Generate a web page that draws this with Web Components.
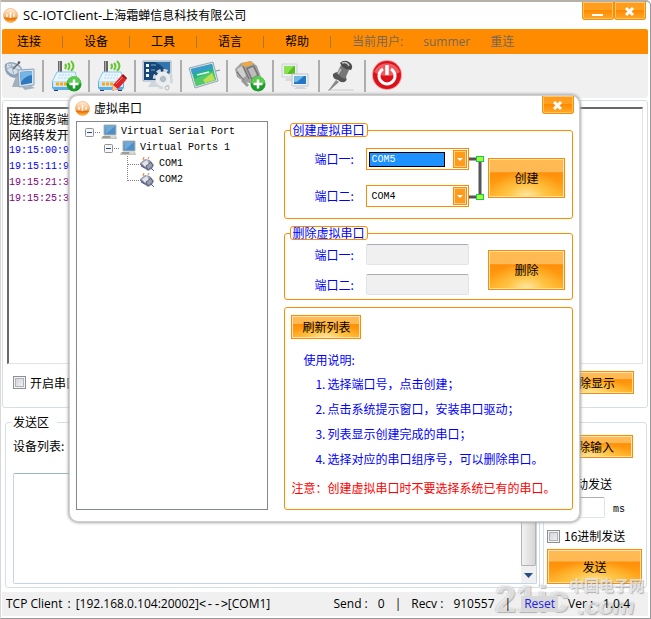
<!DOCTYPE html>
<html lang="zh-CN">
<head>
<meta charset="utf-8">
<title>SC-IOTClient</title>
<style>
body {
    margin: 0;
    background: #fff;
    font: 12px/16px "Open Sans", "Noto Sans CJK SC", sans-serif;
    color: #000;
    --orange: #ff8c00;
    --song: "Noto Sans CJK SC", sans-serif;
    --mono: "Liberation Mono", "Noto Sans CJK SC", monospace;
}
</style>
</head>
<body>
<client-window></client-window>

<template id="t-button">
    <style>
    :host { display: block; }
    button {
        box-sizing: border-box;
        width: 100%;
        height: 100%;
        min-height: 23px;
        padding: 0 8px;
        border: 1px solid var(--orange);
        box-shadow: inset 0 0 0 1px #ffe3b4;
        background:
            radial-gradient(ellipse 50% 70% at 50% 100%, #ffe9a8 0%, rgba(255, 205, 80, .7) 50%, rgba(255, 170, 40, 0) 100%),
            linear-gradient(#ffba50 0%, #ffb955 34%, #ff8f08 36%, #ff9a10 60%, #ffb42c 100%);
        font: 12px/16px var(--song);
        color: #000;
        white-space: nowrap;
    }
    </style>
    <button type="button"><slot></slot></button>
</template>

<template id="t-caption">
    <style>
    :host { display: block; width: 32px; height: 18px; }
    button {
        display: block;
        box-sizing: border-box;
        width: 100%;
        height: 100%;
        padding: 0;
        border: 1px solid #ff8c00;
        border-top: 0;
        border-radius: 0 0 3px 3px;
        box-shadow: inset 0 0 0 1px #ffc66a;
        background: linear-gradient(#ff9a1c 0%, #ffa020 45%, #ff8a00 50%, #ffa82c 100%);
    }
    svg { display: block; margin: 0 auto; }
    </style>
    <button type="button">
        <svg width="12" height="12" viewBox="0 0 12 12" stroke="#fff" fill="none"><path/></svg>
    </button>
</template>

<template id="t-logo">
    <style>
    :host { display: block; width: 15px; height: 15px; }
    svg { display: block; }
    </style>
    <svg width="15" height="15" viewBox="0 0 15 15">
        <defs>
            <linearGradient id="a" x1="0" y1="0" x2="0" y2="1">
                <stop offset="0" stop-color="#fff0dc"/>
                <stop offset=".4" stop-color="#fbc894"/>
                <stop offset=".65" stop-color="#f6a050"/>
                <stop offset=".75" stop-color="#ee7a10"/>
                <stop offset="1" stop-color="#ffc040"/>
            </linearGradient>
        </defs>
        <circle cx="7.500" cy="7.500" r="7" fill="url(#a)" stroke="#f4a050" stroke-width=".6"/>
        <path d="M4 9V6M7.500 10V4M11 9V6" stroke="#fff" stroke-width="1.400"/>
        <path d="M1 10q6.500 2 13 0" stroke="#e86c00" fill="none"/>
    </svg>
</template>

<template id="t-menu">
    <style>
    :host { display: block; background: var(--orange); border-radius: 2px 2px 0 0; }
    nav { display: flex; align-items: center; gap: 21px; height: 25px; padding: 0 15px; white-space: nowrap; }
    a { color: #000; text-decoration: none; }
    i { width: 1px; height: 12px; background: #a8763a; }
    .user { display: flex; gap: 20px; color: #776655; }
    .user a { color: inherit; }
    </style>
    <nav>
        <a href="#connect">连接</a><i></i>
        <a href="#device">设备</a><i></i>
        <a href="#tools">工具</a><i></i>
        <a href="#language">语言</a><i></i>
        <a href="#help">帮助</a><i></i>
        <div class="user"><span>当前用户:</span><span>summer</span><a href="#reconnect">重连</a></div>
    </nav>
</template>

<template id="t-tools">
    <style>
    :host { display: block; background: #f0f0f0; border-radius: 0 0 3px 3px; }
    div { display: flex; align-items: center; gap: 6px; height: 44px; padding: 0 2px; }
    button { width: 32px; height: 32px; padding: 0; border: 0; background: none; }
    i { width: 2px; height: 32px; background: #adadad; }
    svg { display: block; }
    </style>
    <div></div>
</template>

<template id="t-check">
    <style>
    :host { display: block; }
    label { display: flex; align-items: center; gap: 4px; font: 12px/16px var(--song); white-space: nowrap; }
    input {
        appearance: none;
        box-sizing: border-box;
        flex: none;
        width: 13px;
        height: 13px;
        margin: 0;
        border: 1px solid #8e8f8f;
        box-shadow: inset 0 0 0 1px #f4f4f4, inset 0 0 0 2px #aeb3b9;
        background: linear-gradient(135deg, #cbcfd5, #f6f6f6);
    }
    </style>
    <label><input type="checkbox"><slot></slot></label>
</template>

<template id="t-group">
    <style>
    :host { display: block; color: #00f; font: 12px/16px var(--song); }
    fieldset {
        box-sizing: border-box;
        width: 100%;
        height: 100%;
        min-width: 0;
        margin: 0;
        padding: 0 6px;
        border: 1px solid var(--orange);
        border-radius: 3px;
    }
    legend {
        box-sizing: border-box;
        height: 14px;
        min-width: 78px;
        margin-left: -1px;
        padding: 0 1px;
        border: 1px solid var(--orange);
        border-radius: 3px;
        line-height: 12px;
    }
    </style>
    <fieldset><slot></slot></fieldset>
</template>

<template id="t-port">
    <style>
    :host { display: flex; align-items: center; gap: 8px; font: 12px/16px var(--song); }
    label { flex: none; width: 44px; text-align: left; white-space: nowrap; }
    .box {
        box-sizing: border-box;
        flex: 1;
        display: flex;
        align-items: center;
        height: 22px;
        min-width: 0;
        padding: 0 1px 0 2px;
        border: 1px solid var(--orange);
        background: #fff;
    }
    select {
        appearance: none;
        box-sizing: border-box;
        flex: 1;
        min-width: 0;
        height: 15px;
        margin: 0 8px 0 0;
        padding: 0 1px;
        border: 1px solid transparent;
        border-radius: 0;
        background: transparent;
        color: #000;
        font: 10px/13px var(--mono);
    }
    :host([active]) select { border-color: #000; background: #1e90ff; color: #fff; }
    input {
        box-sizing: border-box;
        flex: 1;
        min-width: 0;
        height: 21px;
        border: 1px solid #dfe4ec;
        border-top-color: #abadb3;
        border-radius: 2px;
        background: #f0f0f0;
    }
    svg { flex: none; display: block; }
    </style>
    <label for="port"></label>
</template>

<template id="t-tree">
    <style>
    :host { display: block; box-sizing: border-box; border: 1px solid #828790; background: #fff; font: 10px/16px var(--mono); }
    ul { list-style: none; margin: 0; padding: 0; }
    ul ul { padding-left: 19px; }
    .root { padding: 2px 8px; }
    .row { display: flex; height: 16px; white-space: nowrap; }
    .row svg { flex: none; }
    .row span { padding-left: 4px; }
    </style>
    <ul class="root"></ul>
</template>

<template id="t-dialog">
    <style>
    :host {
        display: block;
        box-sizing: border-box;
        padding: 0 5px 11px;
        border: 1px solid #cfcfcf;
        border-radius: 9px;
        background: #fff;
        box-shadow: 0 0 3px 1px #a8a8a8;
    }
    header { display: flex; align-items: center; gap: 4px; height: 25px; }
    caption-button { align-self: flex-start; margin-left: auto; }
    .body { display: grid; grid-template-columns: minmax(0, 2fr) minmax(0, 3fr); gap: 16px; padding: 0 1px; }
    .side { display: flex; flex-direction: column; gap: 7px; padding-top: 2px; }
    .ports { display: grid; grid-template-columns: minmax(0, 1fr) 19px 77px; align-items: center; padding: 0 1px 0 23px; }
    .fields { display: flex; flex-direction: column; }
    .create .fields { gap: 15px; padding: 11px 0; }
    .remove .fields { gap: 9px; padding: 4px 0; }
    .ports svg { display: block; }
    orange-button { height: 40px; }
    .ports orange-button { grid-column: 3; }
    .help { flex: 1; }
    .refresh { width: 70px; height: 24px; margin-top: 7px; }
    p, ol { margin: 0; padding: 0; line-height: 16px; }
    .how { padding: 13px 12px 8px; }
    ol { display: grid; gap: 9px; padding: 0 0 0 24px; list-style: none; }
    li { display: flex; white-space: nowrap; }
    li span { width: 12px; }
    .note { padding: 13px 0; color: #f00; white-space: nowrap; }
    </style>
    <header><app-logo></app-logo><span>虚拟串口</span><caption-button icon="close" label="关闭"></caption-button></header>
    <div class="body">
        <port-tree></port-tree>
        <div class="side">
            <group-box legend="创建虚拟串口">
                <div class="ports create">
                    <div class="fields">
                        <port-field label="端口一:" value="COM5" active></port-field>
                        <port-field label="端口二:" value="COM4"></port-field>
                    </div>
                    <svg width="19" height="60" viewBox="0 0 19 60">
                        <path d="M0 11H11V49H0" fill="none" stroke="#555" stroke-width="3"/>
                        <rect x="7.500" y="8.500" width="7" height="5" fill="#b6ff20" stroke="#00d060"/>
                        <rect x="7.500" y="46.500" width="7" height="5" fill="#b6ff20" stroke="#00d060"/>
                    </svg>
                    <orange-button>创建</orange-button>
                </div>
            </group-box>
            <group-box legend="删除虚拟串口">
                <div class="ports remove">
                    <div class="fields">
                        <port-field label="端口一:"></port-field>
                        <port-field label="端口二:"></port-field>
                    </div>
                    <orange-button>删除</orange-button>
                </div>
            </group-box>
            <group-box class="help">
                <orange-button class="refresh">刷新列表</orange-button>
                <p class="how">使用说明:</p>
                <ol>
                    <li><span>1.</span>选择端口号，点击创建；</li>
                    <li><span>2.</span>点击系统提示窗口，安装串口驱动；</li>
                    <li><span>3.</span>列表显示创建完成的串口；</li>
                    <li><span>4.</span>选择对应的串口组序号，可以删除串口。</li>
                </ol>
                <p class="note">注意：创建虚拟串口时不要选择系统已有的串口。</p>
            </group-box>
        </div>
    </div>
</template>

<template id="t-receive">
    <style>
    :host { display: flex; flex-direction: column; box-sizing: border-box; padding: 6px 4px 13px; border: 1px solid #d5dfe5; border-radius: 3px; }
    .log {
        flex: 1;
        padding: 2px 0;
        border: 1px solid #e3e3e3;
        border-top: 2px solid #696969;
        border-left: 2px solid #696969;
        font: 10px/16px var(--mono);
        color: #00f;
    }
    .log div { white-space: nowrap; }
    .log .text { font: 12px/16px var(--song); color: #000; }
    .log .out { color: #800080; }
    .bar { display: flex; align-items: center; justify-content: space-between; padding: 7px 9px 0 6px; }
    orange-button { width: 86px; height: 23px; }
    </style>
    <div class="log" role="log">
        <div class="text">连接服务端</div>
        <div class="text">网络转发开</div>
        <div>19:15:00:9</div>
        <div>19:15:11:9</div>
        <div class="out">19:15:21:3</div>
        <div class="out">19:15:25:3</div>
    </div>
    <div class="bar">
        <check-field>开启串口</check-field>
        <orange-button>清除显示</orange-button>
    </div>
</template>

<template id="t-send">
    <style>
    :host { display: grid; grid-template-columns: 1fr 104px; gap: 3px; font: 12px/16px var(--song); }
    fieldset { min-width: 0; margin: 0; padding: 0 2px 3px 7px; border: 1px solid #d5dfe5; border-radius: 3px; }
    legend { margin-left: -1px; padding: 0 8px 0 1px; }
    .list { padding: 8px 0 19px; }
    .editor { display: flex; height: 109px; border: 1px solid #c5d5e3; border-top-color: #9ab5cc; border-radius: 2px; }
    textarea { flex: 1; min-width: 0; padding: 2px; border: 0; outline: 0; background: #fff; resize: none; font: inherit; }
    .scroll { display: flex; flex-direction: column; width: 15px; background: #f0f0f0; }
    .thumb { flex: 1; margin-top: 1px; border: 1px solid #b4b4b4; border-radius: 1px; background: linear-gradient(90deg, #f2f2f2, #d6d6d6); }
    .side { display: flex; flex-direction: column; box-sizing: border-box; margin-top: 8px; padding: 12px 4px 3px 3px; border: 1px solid #d5dfe5; border-radius: 3px; }
    .clear { height: 23px; margin-right: 9px; }
    .side check-field { padding: 10px 0 5px; }
    .side .auto { padding: 18px 0 5px; }
    .interval { display: flex; align-items: center; gap: 8px; }
    .interval input { box-sizing: border-box; width: 58px; height: 21px; border: 1px solid #dfe4ec; border-top-color: #abadb3; border-radius: 2px; }
    .interval label { padding-top: 5px; font: 10px/16px var(--mono); }
    .send { flex: 1; min-height: 34px; }
    </style>
    <fieldset>
        <legend>发送区</legend>
        <div class="list">设备列表:</div>
        <div class="editor">
            <textarea aria-label="发送区"></textarea>
            <div class="scroll">
                <div class="thumb"></div>
                <svg width="15" height="17" viewBox="0 0 15 17"><path d="M3 7h9l-4.500 5z" fill="#24508a"/></svg>
            </div>
        </div>
    </fieldset>
    <div class="side">
        <orange-button class="clear">清除输入</orange-button>
        <check-field class="auto">自动发送</check-field>
        <div class="interval"><input id="ms"><label for="ms">ms</label></div>
        <check-field>16进制发送</check-field>
        <orange-button class="send">发送</orange-button>
    </div>
</template>

<template id="t-status">
    <style>
    :host { display: flex; justify-content: space-between; align-items: center; height: 24px; padding: 0 18px 0 4px; background: #f0f0f0; white-space: nowrap; }
    div { position: relative; z-index: 2; display: flex; gap: 10px; }
    .link { gap: 5px; }
    .link code { font: 12px/16px "Liberation Mono", monospace; }
    a { padding: 0 3px; background: #d8d8d8; color: #2020e8; text-decoration: none; }
    </style>
    <div class="link"><span>TCP Client</span><span>:</span><span>[192.168.0.104:20002]<code>&lt;--&gt;</code>[COM1]</span></div>
    <div>
        <span>Send :</span><span>0</span><span>|</span>
        <span>Recv :</span><span>910557</span><span>|</span>
        <a href="#reset">Reset</a><span>Ver :</span><span>1.0.4</span>
    </div>
</template>

<template id="t-watermark">
    <style>
    :host { display: flex; align-items: flex-end; color: rgba(255, 255, 255, .6); text-shadow: 1px 1px 1px rgba(120, 120, 120, .5), -1px 0 1px rgba(170, 170, 170, .4); white-space: nowrap; pointer-events: none; }
    b { font: bold 38px/38px "Liberation Sans", sans-serif; }
    div { display: flex; flex-direction: column; align-items: center; }
    span { font: bold 15px/18px var(--song); }
    em { font: italic bold 24px/24px "Liberation Sans", sans-serif; }
    </style>
    <b>21ic</b>
    <div><span>中国电子网</span><em>.com</em></div>
</template>

<template id="t-window">
    <style>
    :host {
        position: relative;
        display: flex;
        flex-direction: column;
        box-sizing: border-box;
        min-height: 100vh;
        padding: 0 2px 2px 1px;
        border-top: 2px solid #b5b0a8;
        border-right: 1px solid #999;
        border-bottom: 1px solid #999;
        border-left: 1px solid #d8d8d8;
        border-radius: 0 5px 0 0;
    }
    header { display: flex; align-items: center; gap: 5px; height: 27px; padding: 0 2px 0 1px; }
    .name { font-size: 13px; }
    .name span { font-size: 12px; }
    .caption { display: flex; align-self: flex-start; margin-left: auto; }
    receive-panel { flex: 1; margin-top: 2px; }
    send-panel { margin: 6px 1px 4px 3px; }
    port-dialog { position: absolute; top: 93px; left: 68px; right: 70px; }
    water-mark { position: absolute; right: 6px; bottom: 0; }
    </style>
    <header>
        <app-logo></app-logo>
        <div class="name">SC-IOTClient-<span>上海霜蝉信息科技有限公司</span></div>
        <div class="caption">
            <caption-button icon="min" label="最小化"></caption-button>
            <caption-button icon="close" label="关闭"></caption-button>
        </div>
    </header>
    <menu-bar></menu-bar>
    <tool-bar></tool-bar>
    <receive-panel></receive-panel>
    <send-panel></send-panel>
    <status-bar></status-bar>
    <port-dialog></port-dialog>
    <water-mark></water-mark>
</template>

<script>
const router = `
    <path d="M8 1h4v13H8z" fill="#666"/><path d="M9 1h1v12H9z" fill="#aaa"/>
    <path d="M15 4q2 2 0 5M18 3q3 3 0 7M21 1q5 5 0 10" fill="none" stroke="#63c72e" stroke-width="2"/>
    <path d="M7 12h18l3 10v6l-2 2H4l-2-2v-6z" fill="#5aaee2"/>
    <path d="M7 12h18l3 10H2z" fill="#e9f6ff" stroke="#8ac9ee"/>
    <path d="M3 22h24v5H3z" fill="#cfe8f7"/>
    <path d="M9 15h13M8 18h15" stroke="#b9d5e5" stroke-dasharray="2 1"/>
    <path d="M6 24h12" stroke="#ffa510" stroke-width="3" stroke-dasharray="3 1"/>
    <path d="M4 30h4v1H4zM22 30h4v1h-4z" fill="#337"/>`;

const plus = `
    <circle cx="24" cy="24" r="7.500" fill="#1d9c2b"/>
    <path d="M17 23a7 7 0 0 1 14 0q-7 3-14 0" fill="#5ccc50"/>
    <path d="M24 19.500v9M19.500 24h9" stroke="#fff" stroke-width="2.500"/>`;

const icons = [
    ['连接', `
        <path d="M12 16l-4 11h9l-3-11" fill="#a6afbc"/>
        <path d="M1 4Q-1 16 11 18l8-6Q17 2 6 2z" fill="#8da2b8"/>
        <path d="M3 4Q1 12 10 15l8-5Q12 2 3 4z" fill="#d4dfe9"/>
        <path d="M4 5l12 6M7 3l3 12M2 9l12-4" stroke="#a1b2c3" fill="none"/>
        <path d="M9 9l6-6" stroke="#666" stroke-width="1.200"/>
        <circle cx="15" cy="2.500" r="1.300" fill="#556"/>
        <path d="M14 10l16-1v16l-15 2z" fill="#d8e2ec" stroke="#8fa3b6"/>
        <path d="M16 12l12-1v12l-11 2z" fill="#2d78bf"/>
        <path d="M16 12l12-1v4q-7 1-11 7z" fill="#76b4e5"/>
        <path d="M18 27l9-1 4 2-10 2z" fill="#a4b0bd"/>`],
    ['添加设备', router + plus],
    ['编辑设备', router + `
        <path d="M17 25l8-9 5 4-8 9-6 2z" fill="#df2525"/>
        <path d="M25 16l5 4 1-2-4-4z" fill="#a90e16"/>
        <path d="M17 25l5 4-6 2z" fill="#f8c898"/>
        <path d="M20 24l7-7" stroke="#ff7777"/>`],
    ['设置', `
        <path d="M1 1h28v20H1z" fill="#dbe4ed" stroke="#a3b2c0"/>
        <path d="M2 2h26v18H2z" fill="#174779"/>
        <path d="M13 2h15v18q-2-12-15-18z" fill="#3376ad"/>
        <path d="M4 4h3v3H4zM4 9h3v3H4zM4 14h3v3H4z" fill="#f1f6fa"/>
        <path d="M9 5h5M9 10h4" stroke="#7fb0d8"/>
        <path d="M9 22h10l3 5H6z" fill="#cfd6dc"/>
        <circle cx="21" cy="19" r="8.500" fill="none" stroke="#d3d8dc" stroke-width="3.500" stroke-dasharray="4 2.700"/>
        <circle cx="21" cy="19" r="6" fill="#e6e9ec" stroke="#eceef0" stroke-width="3"/>
        <circle cx="21" cy="19" r="2.500" fill="#b4c0ca" stroke="#a5b1bb"/>
        <circle cx="25" cy="28" r="2" fill="#eee" stroke="#bbb"/>`],
    ['屏幕', `
        <path d="M1 8L25 2l5 19-23 7z" fill="#d5dfe5" stroke="#97a9b4"/>
        <path d="M3 9l21-5 4 16-20 6z" fill="#22b487"/>
        <path d="M3 9l21-5 1 4-21 6z" fill="#3a9acb"/>
        <path d="M6 19l19-8 3 9-20 6z" fill="#52c969"/>
        <path d="M15 20l9-7 3 7-10 3z" fill="#bddf52"/>
        <path d="M9 15l12-3" stroke="#e7ffe9" stroke-width="1.500"/>
        <path d="M28 11l4-1" stroke="#7c8890"/>`],
    ['添加串口', `
        <path d="M1 9l6-6 10-2 6 5 4 11-7 7-9-2-8-5z" fill="#a0a0a0"/>
        <path d="M7 4l9-3 4 3-9 3z" fill="#eea943"/>
        <path d="M3 9l5-3 4 10-4 3z" fill="#cfcfcf"/>
        <path d="M12 8l8-3 5 10-7 6z" fill="#777"/>
        <path d="M14 9l5-2 4 8-5 3z" fill="#bdbdbd"/>
        <path d="M3 12l7 8M9 6l6 13" stroke="#666"/>
        <path d="M8 20l6 6" stroke="#999" stroke-width="3"/>` + plus],
    ['网络', `
        <path d="M2 4h15v13H2z" fill="#eceef0" stroke="#ccd1d5"/>
        <path d="M4 6h11v8H4z" fill="#54bd22"/><path d="M4 6h10l-7 8H4z" fill="#8be052"/>
        <path d="M6 18h8l2 3H5z" fill="#d9dcdf"/>
        <path d="M12 14h16v12H12z" fill="#eff1f3" stroke="#bcc5cd"/>
        <path d="M14 16h12v8H14z" fill="#2476c5"/><path d="M14 16h10l-7 6h-3z" fill="#70b8ea"/>
        <path d="M16 27h8l3 2H14z" fill="#d2d5d9"/>`],
    ['固定', `
        <path d="M2 30h26" stroke="#ccc"/>
        <path d="M10 20l3 2L4 30l-2 1z" fill="#888"/>
        <path d="M7 14q5-4 10 0t3 7q-4 3-8-1-6-1-5-6z" fill="#555"/>
        <path d="M11 13l4-8 8 5-4 9q-5-2-8-6z" fill="#777"/>
        <path d="M14 3q4-4 9-1 5 3 2 8-8 0-11-7z" fill="#4a4a4a"/>
        <path d="M16 3q5-2 7 3M15 9l-3 5" stroke="#c2c2c2" stroke-width="1.500" fill="none"/>`],
    ['退出', `
        <circle cx="15" cy="15" r="15" fill="#f49898"/>
        <circle cx="15" cy="15" r="14" fill="#db101a"/>
        <path d="M2 12A14 14 0 0 1 28 12Q15 20 2 12z" fill="#f15a5e"/>
        <path d="M11 9a8 8 0 1 0 8 0" fill="none" stroke="#fff" stroke-width="3"/>
        <path d="M15 5v10" stroke="#fff" stroke-width="3.500"/>`]
];

const pc = `
    <path d="M3 1h12v10H3z" fill="#4f8fc8" stroke="#b5b5ab"/>
    <path d="M4 2h10L5 10z" fill="#6fa9d8"/>
    <path d="M1 12h14l1 3H0z" fill="#c4c4bb"/>
    <path d="M2 13h7" stroke="#777"/><path d="M10 13h4" stroke="#eee"/>`;

const plug = `
    <path d="M1 7l5-4 5 1 4 5-2 4-4 2-7-5z" fill="#9a9eb0"/>
    <path d="M3 7l5-3 2 4-4 3z" fill="#e4e4ea"/>
    <path d="M7 10l5-4 2 4-5 4zM1 8l7 5" fill="none" stroke="#5c5f74"/>
    <path d="M4 4l1-3M9 3l1-2" stroke="#f07830"/>
    <path d="M12 12l3 3M2 10l4 2" stroke="#4c5cac"/>`;

const expander = `
    <rect x=".5" y="4.500" width="8" height="8" rx="1" fill="#f8f8f8" stroke="#919191"/>
    <path d="M2 8.500h5" stroke="#2346a4"/>
    <path d="M10 8.500h6" stroke="#808080" stroke-dasharray="1 1"/>`;

const treeData = [{
    text: 'Virtual Serial Port',
    children: [{
        text: 'Virtual Ports 1',
        children: [{ text: 'COM1' }, { text: 'COM2', last: true }]
    }]
}];

class BaseElement extends HTMLElement {
    constructor() {
        super();
        this._root = this.attachShadow({ mode: 'open' });
        const template = document.querySelector(this.constructor.template);
        this._root.appendChild(template.content.cloneNode(true));
    }
}

// elements that only show their template
function define(name, template) {
    window.customElements.define(name, class extends BaseElement {
        static get template() {
            return template;
        }
    });
}

class CaptionButton extends BaseElement {
    static get template() {
        return '#t-caption';
    }
    connectedCallback() {
        const $path = this._root.querySelector('path');
        const close = this.getAttribute('icon') === 'close';
        $path.setAttribute('d', close ? 'M2 3l7 7M9 3l-7 7' : 'M0 10h11');
        $path.setAttribute('stroke-width', close ? '3' : '2');
        this._root.querySelector('button').setAttribute('aria-label', this.getAttribute('label'));
    }
}

class ToolBar extends BaseElement {
    static get template() {
        return '#t-tools';
    }
    connectedCallback() {
        this._root.querySelector('div').innerHTML = icons.map(([label, shape]) => `
            <button type="button" aria-label="${label}">
                <svg width="32" height="32" viewBox="0 0 32 32">${shape}</svg>
            </button>`).join('<i></i>');
    }
}

class GroupBox extends BaseElement {
    static get template() {
        return '#t-group';
    }
    connectedCallback() {
        if (this.hasAttribute('legend')) {
            const $legend = document.createElement('legend');
            $legend.textContent = this.getAttribute('legend');
            this._root.querySelector('fieldset').prepend($legend);
        }
    }
}

class PortField extends BaseElement {
    static get template() {
        return '#t-port';
    }
    connectedCallback() {
        const $label = this._root.querySelector('label');
        const value = this.getAttribute('value');
        $label.textContent = this.getAttribute('label');
        $label.insertAdjacentHTML('afterend', value ? `
            <div class="box">
                <select id="port"><option>${value}</option></select>
                <svg width="14" height="18" viewBox="0 0 14 18">
                    <rect x=".5" y=".5" width="13" height="17" fill="#ff9a1a" stroke="#ff8c00"/>
                    <rect x="1.500" y="1.500" width="11" height="15" fill="none" stroke="#ffd08a"/>
                    <path d="M4 8h6l-3 3z" fill="#fff"/>
                </svg>
            </div>` : '<input id="port" disabled>');
    }
}

class PortTree extends BaseElement {
    static get template() {
        return '#t-tree';
    }
    connectedCallback() {
        this._root.querySelector('ul').innerHTML = treeData.map(node => this._node(node)).join('');
    }
    _node(node) {
        const leaf = !node.children;
        const branch = `<path d="M4.500 0v${node.last ? 9 : 16}M5 8.500h11" stroke="#808080" stroke-dasharray="1 1" fill="none"/>`;
        return `<li>
            <div class="row">
                <svg width="16" height="16" viewBox="0 0 16 16">${leaf ? branch : expander}</svg>
                <svg width="16" height="16" viewBox="0 0 16 16">${leaf ? plug : pc}</svg>
                <span>${node.text}</span>
            </div>
            ${leaf ? '' : `<ul>${node.children.map(child => this._node(child)).join('')}</ul>`}
        </li>`;
    }
}

define('orange-button', '#t-button');
define('app-logo', '#t-logo');
define('menu-bar', '#t-menu');
define('check-field', '#t-check');
define('receive-panel', '#t-receive');
define('send-panel', '#t-send');
define('status-bar', '#t-status');
define('water-mark', '#t-watermark');
window.customElements.define('caption-button', CaptionButton);
window.customElements.define('tool-bar', ToolBar);
window.customElements.define('group-box', GroupBox);
window.customElements.define('port-field', PortField);
window.customElements.define('port-tree', PortTree);
define('port-dialog', '#t-dialog');
define('client-window', '#t-window');
</script>
</body>
</html>
